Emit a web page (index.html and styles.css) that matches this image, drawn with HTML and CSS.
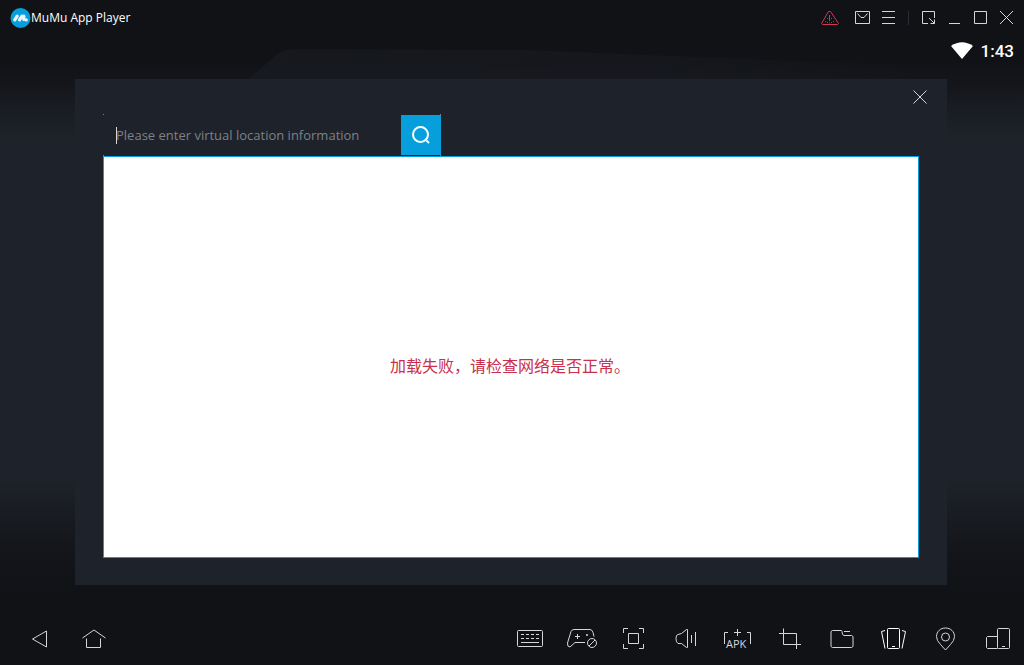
FILE: index.html
```html
<!DOCTYPE html>
<html lang="en">
<head>
<meta charset="utf-8">
<meta name="viewport" content="width=device-width, initial-scale=1">
<title>MuMu App Player</title>
<link rel="stylesheet" href="styles.css">
</head>
<body>
<div class="app">
  <header class="titlebar">
    <div class="brand">
      <svg class="logo" width="21" height="22" viewBox="0 0 22 22"><circle cx="11" cy="11" r="10.5" fill="#079edc"/><path d="M5 13 7.500 9M10 13 12.500 9M14.500 12.500V9" stroke="#e9f5fb" stroke-width="3.400" stroke-linecap="round" fill="none"/><circle cx="17" cy="13" r="1.700" fill="#e9f5fb"/></svg>
      <h1 class="brand-name">MuMu App Player</h1>
    </div>
    <div class="window-tools">
      <button class="tool" aria-label="Alert"><svg class="alert" width="20" height="16" viewBox="0 0 20 16"><path d="M8.500 1.500h2l8 12-1 1h-15l-1-1z"/><path d="M9.500 5v6"/><path class="alert-dots" d="M7 8.500h1M11 8.500h1M5 11.500h1M7 12.500h1M11 12.500h1M13 11.500h1M9 13h1"/></svg></button>
      <button class="tool mail" aria-label="Messages"><svg width="15" height="13" viewBox="0 0 15 13"><path d="M.5.5h14v12H.5zM2.500 2.500 6 6.500h3l3.500-4"/></svg></button>
      <button class="tool menu" aria-label="Menu"><svg width="13" height="13" viewBox="0 0 13 13"><path d="M0 .5h13M0 6.500h13M0 12.500h13"/></svg></button>
      <span class="divider"></span>
      <button class="tool shrink" aria-label="Resize"><svg width="14" height="14" viewBox="0 0 14 14"><path d="M12.500 7V.5H.5v12H6M7 7l5.500 5.500M8.500 12.500h4v-4"/></svg></button>
      <button class="tool minimize" aria-label="Minimize"><svg width="12" height="14" viewBox="0 0 12 14"><path d="M0 12.500h11"/></svg></button>
      <button class="tool" aria-label="Maximize"><svg width="13" height="13" viewBox="0 0 13 13"><path d="M.5.5h12v12H.5z"/></svg></button>
      <button class="tool" aria-label="Close"><svg width="13" height="13" viewBox="0 0 13 13"><path d="m0 0 13 13M13 0 0 13"/></svg></button>
    </div>
  </header>

  <main class="screen">
    <div class="status">
      <svg width="22" height="17" viewBox="0 0 22 17"><path d="M0 4Q11-3.500 22 4L11 17z" fill="#fff"/></svg>
      <time>1:43</time>
    </div>
    <svg class="ridge" width="560" height="32" viewBox="0 0 560 32" preserveAspectRatio="none"><defs><linearGradient id="ridge" x1="0" y1="0" x2="1" y2="0"><stop offset="0" stop-color="#1e222a" stop-opacity=".4"/><stop offset=".6" stop-color="#1e222a" stop-opacity=".3"/><stop offset="1" stop-color="#1e222a" stop-opacity="0"/></linearGradient></defs><path d="M0 32 21 9Q27 2 39 2L220 3 560 20V32z" fill="url(#ridge)"/></svg>
    <section class="dialog" aria-label="Virtual location">
      <button class="dialog-close" aria-label="Close dialog"><svg width="14" height="14" viewBox="0 0 14 14"><path d="m.5.5 13 13M13.500.5l-13 13"/></svg></button>
      <form class="search">
        <span class="caret"></span>
        <input class="search-input" type="text" aria-label="Virtual location" placeholder="Please enter virtual location information">
        <button class="search-button" type="button" aria-label="Search"><svg width="20" height="20" viewBox="0 0 20 20"><circle cx="9.500" cy="9.500" r="7.500"/><path d="m15.500 15.500 2.500 2.500"/></svg></button>
      </form>
      <div class="map"><p class="map-error" lang="zh-CN">加载失败，请检查网络是否正常。</p></div>
    </section>
  </main>

  <footer class="toolbar">
    <div class="nav">
      <button class="tool" aria-label="Back"><svg width="16" height="18" viewBox="0 0 16 18"><path d="M15.500 1v16L1.500 9z"/></svg></button>
      <button class="tool" aria-label="Home"><svg width="24" height="20" viewBox="0 0 24 20"><path d="M.5 9 12 1l11.500 8M4.500 9.500v9h14v-9"/></svg></button>
    </div>
    <div class="actions">
      <button class="tool" aria-label="Keyboard"><svg width="32" height="24" viewBox="0 0 32 24"><rect x="3.500" y="3.500" width="25" height="16" rx="1"/><path d="M7 7.500h3m2 0h3m2 0h3m2 0h3M7 11.500h3m2 0h3m2 0h3m2 0h3M7 15.500h18"/></svg></button>
      <button class="tool" aria-label="Game controller"><svg width="32" height="24" viewBox="0 0 32 24"><path d="M19 15.500H9L4 20q-3 0-2.500-4L5 4.500Q6 2.500 8 2.500h16q2 0 3 3l1 4M11.500 7v5M9 9.500h5M20.500 7.500h1v1h-1z"/><circle cx="26" cy="16" r="4.500"/><path d="m23 19 6-6"/></svg></button>
      <button class="tool" aria-label="Full screen"><svg width="32" height="24" viewBox="0 0 32 24"><path d="M5.500 6V1.500H10M21 1.500h4.500V6M25.500 17v4.500H21M10 21.500H5.500V17M10.500 6.500h10v10h-10z"/></svg></button>
      <button class="tool" aria-label="Volume"><svg width="32" height="24" viewBox="0 0 32 24"><path d="M17.500 2.500v18h-1l-5-4H8q-2-1-2-5t2-4l3.500-1 5-4zM21.500 8v8M25.500 5v14"/></svg></button>
      <button class="tool apk" aria-label="Install APK"><svg width="32" height="24" viewBox="0 0 32 24"><path d="M6 5.500H2.500V17M25 5.500h3.500V17M15.500 2v7M12 5.500h7"/></svg><span class="apk-label">APK</span></button>
      <button class="tool" aria-label="Crop"><svg width="32" height="24" viewBox="0 0 32 24"><path d="M9.500 1.500v16H27M5 6.500h17.500V22"/></svg></button>
      <button class="tool" aria-label="Files"><svg width="32" height="24" viewBox="0 0 32 24"><path d="M15.500 3.500h-9l-1.500 1v15l1.500 1h19l1.500-1V9.500l-1.500-1H18q-2 0-2-4zM18 4.500h6"/></svg></button>
      <button class="tool bright" aria-label="Shake"><svg width="32" height="24" viewBox="0 0 32 24"><rect x="9.500" y="1.500" width="12" height="20" rx="1"/><path d="M14 19.500h3M7 3.500l-3.500 1L7 21.500M24 3.500l3.500 1L24 21.500"/></svg></button>
      <button class="tool" aria-label="Location"><svg width="32" height="26" viewBox="0 0 32 26"><path d="M15.500 23 10.500 17.500q-4-4-4-8c0-5 4-8.500 9-8.500s9 3.500 9 8.500q0 4-4 8z"/><circle cx="15.500" cy="10" r="4"/></svg></button>
      <button class="tool" aria-label="Multiple devices"><svg width="32" height="24" viewBox="0 0 32 24"><rect x="15.500" y="1.500" width="12" height="20" rx="1"/><path d="M15.500 9.500h-10l-1 1v10l1 1h10M20 19.500h3"/></svg></button>
    </div>
  </footer>
</div>
</body>
</html>
```
FILE: styles.css
```css
* { box-sizing: border-box; }
body { margin: 0; background: #111216; font-family: "Noto Sans", "Open Sans", sans-serif; }
h1, p { margin: 0; }
button { padding: 0; border: 0; background: none; color: inherit; font: inherit; }
svg { display: block; flex: none; fill: none; stroke: #d4d6da; }
.app {
  min-height: 100vh;
  display: flex;
  flex-direction: column;
  background: linear-gradient(#111216 0, #111216 9%, #14161b 13%, #191c22 16%, #1e222a 21%, #1e222a 72%, #191c22 77%, #14161b 82%, #111216 89%, #111216 100%);
}
.titlebar { height: 35px; padding: 0 11px 0 10px; display: flex; justify-content: space-between; align-items: center; }
.brand { display: flex; align-items: center; }
.logo, .status svg, .logo circle { stroke: none; }
.brand-name { color: #fff; font: 400 12px/16px "Open Sans", "Noto Sans", sans-serif; }
.window-tools { display: flex; align-items: center; gap: 13px; }
.tool { display: flex; align-items: center; justify-content: center; }
.window-tools .alert { stroke: #d3344f; }
.alert .alert-dots { stroke: #8d4653; }
.mail { margin-left: 2px; }
.menu { margin-left: -1px; }
.divider { width: 1px; height: 14px; background: #292c35; }
.status { height: 31px; padding: 0 10px 0 0; display: flex; align-items: center; justify-content: flex-end; gap: 8px; color: #fff; font: 500 17px/20px Roboto, sans-serif; }
.screen { flex: 1; display: flex; flex-direction: column; position: relative; }
.ridge { position: absolute; top: 12px; left: 249px; width: 68%; stroke: none; }
.dialog {
  flex: 1;
  position: relative;
  display: flex;
  flex-direction: column;
  margin: 13px 77px 0 75px;
  padding: 35px 28px 27px;
  background: #1e222a;
}
.dialog-close { position: absolute; top: 11px; right: 20px; }
.search {
  position: relative;
  width: 338px;
  height: 42px;
  padding-top: 1px;
  display: flex;
  align-items: flex-start;
  background:
    linear-gradient(#7f8185, #7f8185) left top / 1px 1px no-repeat,
    linear-gradient(#7f8185, #7f8185) right top / 1px 1px no-repeat,
    linear-gradient(#7f8185, #7f8185) left bottom / 1px 1px no-repeat,
    linear-gradient(#7f8185, #7f8185) right bottom / 1px 1px no-repeat;
}
.caret { position: absolute; left: 13px; top: 13px; width: 1px; height: 17px; background: #d4d6da; }
.search-input { flex: 1; min-width: 0; height: 40px; padding: 0 13px; border: 0; outline: 0; background: transparent; color: #fff; caret-color: #fff; font: 13px/20px "Open Sans", "Noto Sans", sans-serif; }
.search-input::placeholder { color: #7f8185; opacity: 1; }
.search-button { width: 40px; height: 40px; display: flex; align-items: center; justify-content: center; background: #079edc; }
.search-button svg { stroke: #fff; stroke-width: 2; }
.map { flex: 1; display: flex; align-items: center; justify-content: center; padding: 16px 2px 0 0; border: 1px solid #079edc; background: #fff; }
.map-error { color: #c9304b; font: 16px/24px "Noto Sans CJK SC", sans-serif; }
.toolbar { height: 80px; padding: 42px 10px 0 31px; display: flex; justify-content: space-between; align-items: flex-start; }
.nav { display: flex; align-items: center; gap: 35px; height: 24px; }
.actions { display: flex; align-items: flex-start; gap: 20px; }
.apk { position: relative; }
.apk-label { position: absolute; left: 4px; top: 10px; color: #d4d6da; font: 11px/14px "Open Sans", sans-serif; }
.bright svg { stroke: #fff; }
```
